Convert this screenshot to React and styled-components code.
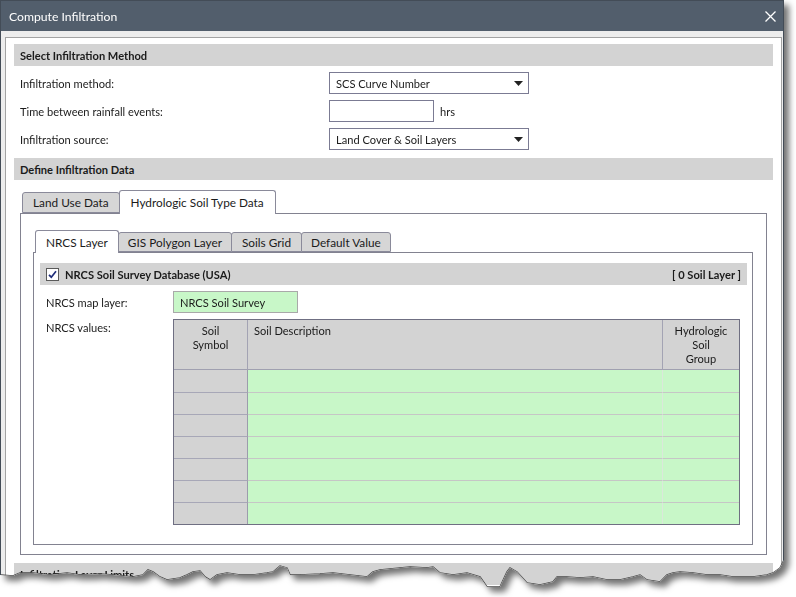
import React from "react";
import styled, { createGlobalStyle } from "styled-components";

const GlobalStyle = createGlobalStyle`
  html, body {
    margin: 0;
    background: #ffffff;
  }
  body {
    font-family: "Lato", "Liberation Sans", sans-serif;
    font-size: 11.1px;
    color: #1b1b1b;
  }
  * {
    box-sizing: border-box;
  }
`;

// torn-paper edge along the bottom of the screenshot (left to right)
const TEAR = [
  [0, 575], [13, 576], [20, 573], [33, 573], [50, 575], [67, 573], [80, 575],
  [100, 574], [113, 575], [133, 577], [143, 575], [148, 570], [153, 572],
  [160, 577], [167, 580], [180, 578], [187, 575], [193, 572], [200, 571],
  [205, 577], [210, 580], [217, 575], [227, 573], [240, 575], [253, 575],
  [267, 573], [273, 572], [280, 566], [287, 568], [290, 575], [300, 575],
  [320, 574], [333, 573], [350, 575], [367, 577], [373, 572], [380, 570],
  [400, 568], [410, 567], [427, 568], [433, 567], [440, 573], [453, 575],
  [467, 573], [480, 577], [487, 587], [500, 587], [507, 572], [510, 568],
  [517, 572], [527, 583], [540, 585], [553, 582], [557, 577], [567, 577],
  [580, 578], [593, 577], [607, 580], [620, 580], [633, 577], [640, 575],
  [647, 580], [660, 582], [667, 575], [673, 573], [680, 572], [693, 573],
  [707, 575], [720, 575], [733, 577], [753, 577], [767, 575], [773, 573],
  [780, 568], [784, 560],
];

const clipPolygon = `polygon(0px 0px, 784px 0px, ${[...TEAR]
  .reverse()
  .map(([x, y]) => `${x}px ${y}px`)
  .join(", ")})`;

const Frame = styled.div`
  width: 784px;
  filter: drop-shadow(5px 5px 3px rgba(0, 0, 0, 0.55));
`;

const Dialog = styled.div`
  position: relative;
  width: 784px;
  height: 597px;
  overflow: hidden;
  background: #ededed;
  border: 1px solid #434c57;
  clip-path: ${clipPolygon};
`;

const TearLine = styled.svg`
  position: absolute;
  top: -1px;
  left: -1px;
  pointer-events: none;
`;

const TitleBar = styled.div`
  display: flex;
  align-items: center;
  justify-content: space-between;
  height: 30px;
  padding: 0 7px 0 8px;
  background: #525e6c;
  color: #ffffff;
  font-size: 12.2px;
`;

const ScrollPanel = styled.div`
  display: flex;
  flex-direction: column;
  margin: 6px 1px 0 4px;
  padding: 6px 8px 0 8px;
  background: #ffffff;
  border: 1px solid #a3a3a3;
`;

const SectionHeader = styled.div`
  display: flex;
  align-items: center;
  height: 22px;
  padding-left: 6px;
  background: #d3d3d3;
  font-weight: 700;
  margin-top: ${(p) => p.$gap || 0}px;
`;

const FieldList = styled.div`
  display: flex;
  flex-direction: column;
  gap: 6px;
  padding: 6px 0 8px 6px;
`;

const FieldRow = styled.div`
  display: grid;
  grid-template-columns: 309px auto 1fr;
  align-items: center;
  height: 22px;
`;

const SelectBox = styled.div`
  display: flex;
  align-items: center;
  justify-content: space-between;
  width: 200px;
  height: 22px;
  padding: 0 5px 0 6px;
  background: #ffffff;
  border: 1px solid #7b7b93;
`;

const TextBox = styled.div`
  width: 105px;
  height: 22px;
  background: #ffffff;
  border: 1px solid #7b7b93;
`;

const Unit = styled.span`
  margin-left: 6px;
`;

const TabGroup = styled.div`
  display: flex;
  flex-direction: column;
  margin: ${(p) => (p.$inner ? "0" : "10px 6px 0 6px")};
`;

const TabStrip = styled.div`
  display: flex;
  align-items: flex-end;
  padding-left: 2px;
`;

const Tab = styled.div`
  position: relative;
  display: flex;
  align-items: center;
  height: ${(p) => (p.$active ? p.$tall : p.$tall - 3)}px;
  padding: 0 ${(p) => p.$pad || 9}px;
  margin-bottom: ${(p) => (p.$active ? -1 : 0)}px;
  background: ${(p) => (p.$active ? "#ffffff" : "#d6d6d6")};
  border: 1px solid #8a8a9a;
  border-bottom: ${(p) => (p.$active ? "none" : "1px solid #8a8a9a")};
  border-radius: 3px 3px 0 0;
  font-size: 11.8px;
  z-index: ${(p) => (p.$active ? 1 : 0)};
  & + & {
    margin-left: -1px;
  }
`;

const TabBody = styled.div`
  display: flex;
  flex-direction: column;
  background: #ffffff;
  border: 1px solid #828290;
  padding: ${(p) => p.$pad};
`;

const SubHeader = styled.div`
  display: flex;
  align-items: center;
  justify-content: space-between;
  height: 22px;
  padding: 0 6px;
  background: #d3d3d3;
  font-weight: 700;
`;

const CheckLabel = styled.div`
  display: flex;
  align-items: center;
  gap: 6px;
`;

const DetailRow = styled.div`
  display: grid;
  grid-template-columns: 127px 1fr;
  align-items: ${(p) => (p.$top ? "start" : "center")};
  margin-top: 6px;
  padding-left: 6px;
`;

const DetailLabel = styled.span`
  padding-top: ${(p) => (p.$top ? 2 : 0)}px;
`;

const GreenField = styled.div`
  display: flex;
  align-items: center;
  width: 125px;
  height: 22px;
  padding-left: 6px;
  background: #c8f7c8;
  border: 1px solid #a9a9a9;
`;

const Grid = styled.div`
  display: grid;
  grid-template-columns: 74px 415px 1fr;
  grid-template-rows: 50px repeat(${(p) => p.$rows}, 22px);
  width: 567px;
  border: 1px solid #6f6f82;
  background: #c8f7c8;
`;

const HeadCell = styled.div`
  padding: ${(p) => (p.$left ? "4px 0 0 6px" : "4px 2px 0")};
  text-align: ${(p) => (p.$left ? "left" : "center")};
  line-height: 14px;
  background: #d3d3d3;
  border-bottom: 1px solid #a0a0b0;
  border-right: ${(p) => (p.$last ? "none" : "1px solid #a3a3b3")};
`;

const SymbolCell = styled.div`
  background: #d3d3d3;
  border-right: 1px solid #9c9cac;
  border-top: ${(p) => (p.$first ? "none" : "1px solid #a7a7b7")};
`;

const DataCell = styled.div`
  background: #c8f7c8;
  border-top: ${(p) => (p.$first ? "none" : "1px solid #c6c6c6")};
  border-right: ${(p) => (p.$last ? "none" : "1px solid #dbe8db")};
`;

const Filler = styled.div`
  height: 40px;
`;

const CloseIcon = () => (
  <svg width="11" height="11" viewBox="0 0 11 11">
    <path d="M0.5 0.5 L10.5 10.5 M10.5 0.5 L0.5 10.5" stroke="#ffffff" strokeWidth="1.3" />
  </svg>
);

const Arrow = () => (
  <svg width="9" height="5" viewBox="0 0 9 5">
    <polygon points="0,0 9,0 4.5,5" fill="#222222" />
  </svg>
);

const CheckBox = () => (
  <svg width="13" height="13" viewBox="0 0 13 13">
    <rect x="0.5" y="0.5" width="12" height="12" fill="#ffffff" stroke="#5a5a5a" />
    <path d="M3 6.8 L5.3 9.2 L10 3.2" fill="none" stroke="#1f2d7a" strokeWidth="1.7" />
  </svg>
);

const ROWS = 7;

export default function App() {
  return (
    <>
      <GlobalStyle />
      <Frame>
        <Dialog>
          <TitleBar>
            <span>Compute Infiltration</span>
            <CloseIcon />
          </TitleBar>

          <ScrollPanel>
            <SectionHeader>Select Infiltration Method</SectionHeader>
            <FieldList>
              <FieldRow>
                <span>Infiltration method:</span>
                <SelectBox>
                  <span>SCS Curve Number</span>
                  <Arrow />
                </SelectBox>
              </FieldRow>
              <FieldRow>
                <span>Time between rainfall events:</span>
                <TextBox />
                <Unit>hrs</Unit>
              </FieldRow>
              <FieldRow>
                <span>Infiltration source:</span>
                <SelectBox>
                  <span>Land Cover &amp; Soil Layers</span>
                  <Arrow />
                </SelectBox>
              </FieldRow>
            </FieldList>

            <SectionHeader>Define Infiltration Data</SectionHeader>
            <TabGroup>
              <TabStrip>
                <Tab $tall={24} $pad={10}>Land Use Data</Tab>
                <Tab $tall={24} $active $pad={11}>
                  Hydrologic Soil Type Data
                </Tab>
              </TabStrip>
              <TabBody $pad="16px 13px 9px 12px">
                <TabGroup $inner>
                  <TabStrip>
                    <Tab $tall={23} $active $pad={10}>NRCS Layer</Tab>
                    <Tab $tall={23}>GIS Polygon Layer</Tab>
                    <Tab $tall={23} $pad={10}>Soils Grid</Tab>
                    <Tab $tall={23}>Default Value</Tab>
                  </TabStrip>
                  <TabBody $pad="10px 5px 19px 6px">
                    <SubHeader>
                      <CheckLabel>
                        <CheckBox />
                        <span>NRCS Soil Survey Database (USA)</span>
                      </CheckLabel>
                      <span>[ 0 Soil Layer ]</span>
                    </SubHeader>
                    <DetailRow>
                      <DetailLabel>NRCS map layer:</DetailLabel>
                      <GreenField>NRCS Soil Survey</GreenField>
                    </DetailRow>
                    <DetailRow $top>
                      <DetailLabel $top>NRCS values:</DetailLabel>
                      <Grid $rows={ROWS}>
                        <HeadCell>
                          Soil
                          <br />
                          Symbol
                        </HeadCell>
                        <HeadCell $left>Soil Description</HeadCell>
                        <HeadCell $last>
                          Hydrologic
                          <br />
                          Soil
                          <br />
                          Group
                        </HeadCell>
                        {Array.from({ length: ROWS }).map((_, i) => (
                          <React.Fragment key={i}>
                            <SymbolCell $first={i === 0} />
                            <DataCell $first={i === 0} />
                            <DataCell $first={i === 0} $last />
                          </React.Fragment>
                        ))}
                      </Grid>
                    </DetailRow>
                  </TabBody>
                </TabGroup>
              </TabBody>
            </TabGroup>

            <SectionHeader $gap={8}>Infiltration Layer Limits</SectionHeader>
            <Filler />
          </ScrollPanel>

          <TearLine width="784" height="597" viewBox="0 0 784 597">
            <polyline
              points={TEAR.map(([x, y]) => `${x},${y}`).join(" ")}
              fill="none"
              stroke="#4a4a4a"
              strokeWidth="1.5"
            />
          </TearLine>
        </Dialog>
      </Frame>
    </>
  );
}
